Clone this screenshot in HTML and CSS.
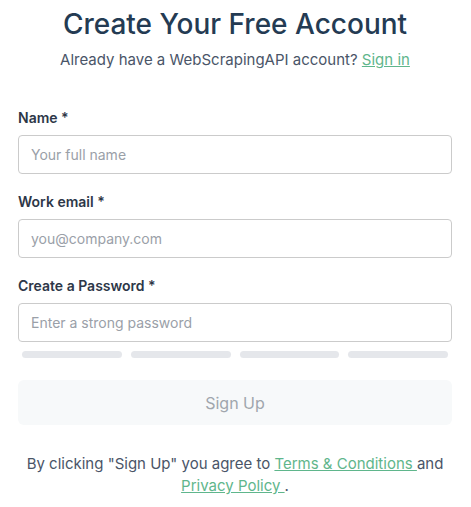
FILE: index.html
```html
<!DOCTYPE html>
<html lang="en">
<head>
    <meta charset="UTF-8">
    <meta name="viewport" content="width=device-width, initial-scale=1.0">
    <title>Sign Up - WebScrapingAPI</title>
    <link rel="stylesheet" href="styles.css">
</head>
<body>
    <div class="signup">
        <h1>Create Your Free Account</h1>
        <p class="subtitle">Already have a WebScrapingAPI account? <a href="#">Sign in</a></p>

        <form class="signup-form">
            <div class="field">
                <label for="name">Name *</label>
                <input type="text" id="name" placeholder="Your full name">
            </div>
            <div class="field">
                <label for="email">Work email *</label>
                <input type="email" id="email" placeholder="you@company.com">
            </div>
            <div class="field">
                <label for="password">Create a Password *</label>
                <input type="password" id="password" placeholder="Enter a strong password">
                <div class="strength">
                    <span></span>
                    <span></span>
                    <span></span>
                    <span></span>
                </div>
            </div>
            <button type="submit" class="signup-btn" disabled>Sign Up</button>
        </form>

        <p class="terms">
            By clicking "Sign Up" you agree to <a href="#">Terms &amp; Conditions </a>and
            <a href="#">Privacy Policy </a>.
        </p>
    </div>
</body>
</html>
```

FILE: styles.css
```css
body {
    font-family: Inter, "Noto Sans", sans-serif;
    background-color: #fff;
    margin: 0;
    color: #4a5568;
}
.signup {
    padding: 7px 19px 0 18px;
}
h1 {
    font-size: 28px;
    font-weight: 500;
    line-height: 34px;
    color: #243b53;
    text-align: center;
    margin: 0;
}
.subtitle {
    font-size: 15px;
    line-height: 20px;
    text-align: center;
    margin: 9px 0 0;
}
a {
    color: #5fb68c;
    text-decoration: underline;
}
.signup-form {
    margin-top: 38px;
}
.field {
    display: flex;
    flex-direction: column;
    margin-bottom: 18px;
}
.field label {
    font-size: 14px;
    font-weight: 600;
    line-height: 20px;
    color: #2d3748;
    margin-bottom: 7px;
}
.field input {
    font-family: inherit;
    font-size: 14px;
    height: 39px;
    box-sizing: border-box;
    padding: 0 12px;
    border: 1px solid #cbcbcb;
    border-radius: 4px;
    color: #2d3748;
}
.field input::placeholder {
    color: #9aa0a8;
}
.strength {
    display: flex;
    gap: 9px;
    padding: 0 4px;
    margin-top: 9px;
}
.strength span {
    flex: 1;
    height: 7px;
    border-radius: 4px;
    background-color: #e5e7eb;
}
.signup-btn {
    display: block;
    width: 100%;
    height: 45px;
    margin-top: 22px;
    border: none;
    border-radius: 6px;
    background-color: #f7f9fa;
    color: #a0a6ad;
    font-family: inherit;
    font-size: 16px;
}
.terms {
    font-size: 15px;
    line-height: 22px;
    text-align: center;
    margin: 28px 0 0;
}
```
